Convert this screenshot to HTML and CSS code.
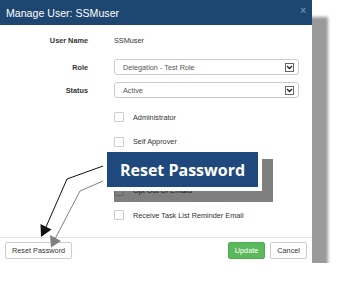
FILE: index.html
```html
<!DOCTYPE html>
<html>
<head>
    <meta charset="UTF-8">
    <title>Manage User</title>
    <link rel="stylesheet" href="styles.css">
</head>
<body>
    <div class="dialog">
        <div class="dlg-head">
            <span class="dlg-title">Manage User: SSMuser</span>
            <span class="dlg-close">&times;</span>
        </div>
        <div class="dlg-body">
            <div class="row row-name">
                <label class="lbl">User Name</label>
                <span class="val">SSMuser</span>
            </div>
            <div class="row row-sel">
                <label class="lbl">Role</label>
                <div class="sel">
                    <span>Delegation - Test Role</span>
                    <span class="sel-arrow"><svg width="7" height="5" viewBox="0 0 7 5"><path d="M1 1 L3.5 3.5 L6 1" fill="none" stroke="#222" stroke-width="1.3"/></svg></span>
                </div>
            </div>
            <div class="row row-sel row-status">
                <label class="lbl">Status</label>
                <div class="sel">
                    <span>Active</span>
                    <span class="sel-arrow"><svg width="7" height="5" viewBox="0 0 7 5"><path d="M1 1 L3.5 3.5 L6 1" fill="none" stroke="#222" stroke-width="1.3"/></svg></span>
                </div>
            </div>
            <div class="checks">
                <div class="chk"><span class="box"></span>Administrator</div>
                <div class="chk"><span class="box"></span>Self Approver</div>
                <!-- this row is hidden under the callout -->
                <div class="chk"><span class="box"></span></div>
                <div class="chk"><span class="box"></span>Opt Out Of Emails</div>
                <div class="chk"><span class="box"></span>Receive Task List Reminder Email</div>
            </div>
        </div>
        <div class="dlg-foot">
            <button class="btn">Reset Password</button>
            <div class="foot-right">
                <button class="btn btn-green">Update</button>
                <button class="btn">Cancel</button>
            </div>
        </div>
    </div>

    <!-- callout laid over the screenshot -->
    <div class="callout">Reset Password</div>
    <svg class="arrows" width="338" height="293" viewBox="0 0 338 293">
        <polyline points="103,166 67,179 46,227" fill="none" stroke="#111" stroke-width="1"/>
        <polygon points="40.5,224 51.5,229.5 41,237" fill="#111"/>
        <polyline points="103,181 80,191 55.5,238" fill="none" stroke="#808080" stroke-width="1"/>
        <polygon points="50,235 61,241 51,247.5" fill="#808080"/>
    </svg>
</body>
</html>
```

FILE: styles.css
```css
body {
    margin: 0;
    background-color: #ffffff;
    font-family: "Liberation Sans", Arial, sans-serif;
    color: #333333;
}

/* the modal window with its flat grey shadow */
.dialog {
    width: 312px;
    height: 263px;
    background-color: #ffffff;
    box-shadow: 16px 17px 3px #9a9a9a;
    display: flex;
    flex-direction: column;
}

.dlg-head {
    height: 25px;
    background-color: #1d4670;
    display: flex;
    align-items: center;
    justify-content: space-between;
    padding: 0 6px;
}
.dlg-title {
    color: #ffffff;
    font-size: 10.6px;
}
.dlg-close {
    color: #7089a3;
    font-size: 10px;
    font-weight: bold;
    margin-top: -5px;
}

.dlg-body {
    flex: 1;
    padding-top: 5px;
    font-size: 7.3px;
}
.row {
    display: flex;
    align-items: center;
    height: 20px;
}
.lbl {
    width: 88px;
    text-align: right;
    font-weight: bold;
    margin-right: 26px;
}
.row-sel {
    height: 16px;
    margin-top: 9px;
}
.row-status {
    margin-top: 7px;
}
.sel {
    width: 185px;
    height: 16px;
    box-sizing: border-box;
    border: 1px solid #cccccc;
    border-radius: 3px;
    display: flex;
    align-items: center;
    justify-content: space-between;
    padding: 0 4px 0 8px;
    color: #555555;
}
.sel-arrow {
    width: 9px;
    height: 9px;
    box-sizing: border-box;
    border: 1px solid #666666;
    display: flex;
    align-items: center;
    justify-content: center;
}

.checks {
    margin-top: 7px;
    padding-left: 114px;
}
.chk {
    height: 24.5px;
    display: flex;
    align-items: center;
}
.box {
    width: 10px;
    height: 10px;
    box-sizing: border-box;
    border: 1px solid #cccccc;
    border-radius: 1px;
    margin-right: 9px;
}

.dlg-foot {
    border-top: 1px solid #e5e5e5;
    padding: 4px 5px 4px 5px;
    display: flex;
    justify-content: space-between;
}
.foot-right {
    display: flex;
    gap: 5px;
}
.btn {
    height: 17px;
    font-family: "Liberation Sans", Arial, sans-serif;
    font-size: 7.3px;
    color: #333333;
    background-color: #ffffff;
    border: 1px solid #cccccc;
    border-radius: 2px;
    padding: 0 6px;
}
.btn-green {
    background-color: #5cb85c;
    border-color: #4cae4c;
    color: #ffffff;
    padding: 0 6px;
}

/* annotation on top, its shadow lets the row below show through */
.callout {
    position: absolute;
    left: 103px;
    top: 148px;
    width: 151px;
    height: 35px;
    border: 4px solid #ffffff;
    background-color: #1f497d;
    box-shadow: 11px 11px 0 rgba(0, 0, 0, 0.5);
    color: #ffffff;
    font-family: "Open Sans", sans-serif;
    font-weight: bold;
    font-size: 16px;
    display: flex;
    align-items: center;
    justify-content: center;
}
.arrows {
    position: absolute;
    left: 0;
    top: 0;
    pointer-events: none;
}
```
